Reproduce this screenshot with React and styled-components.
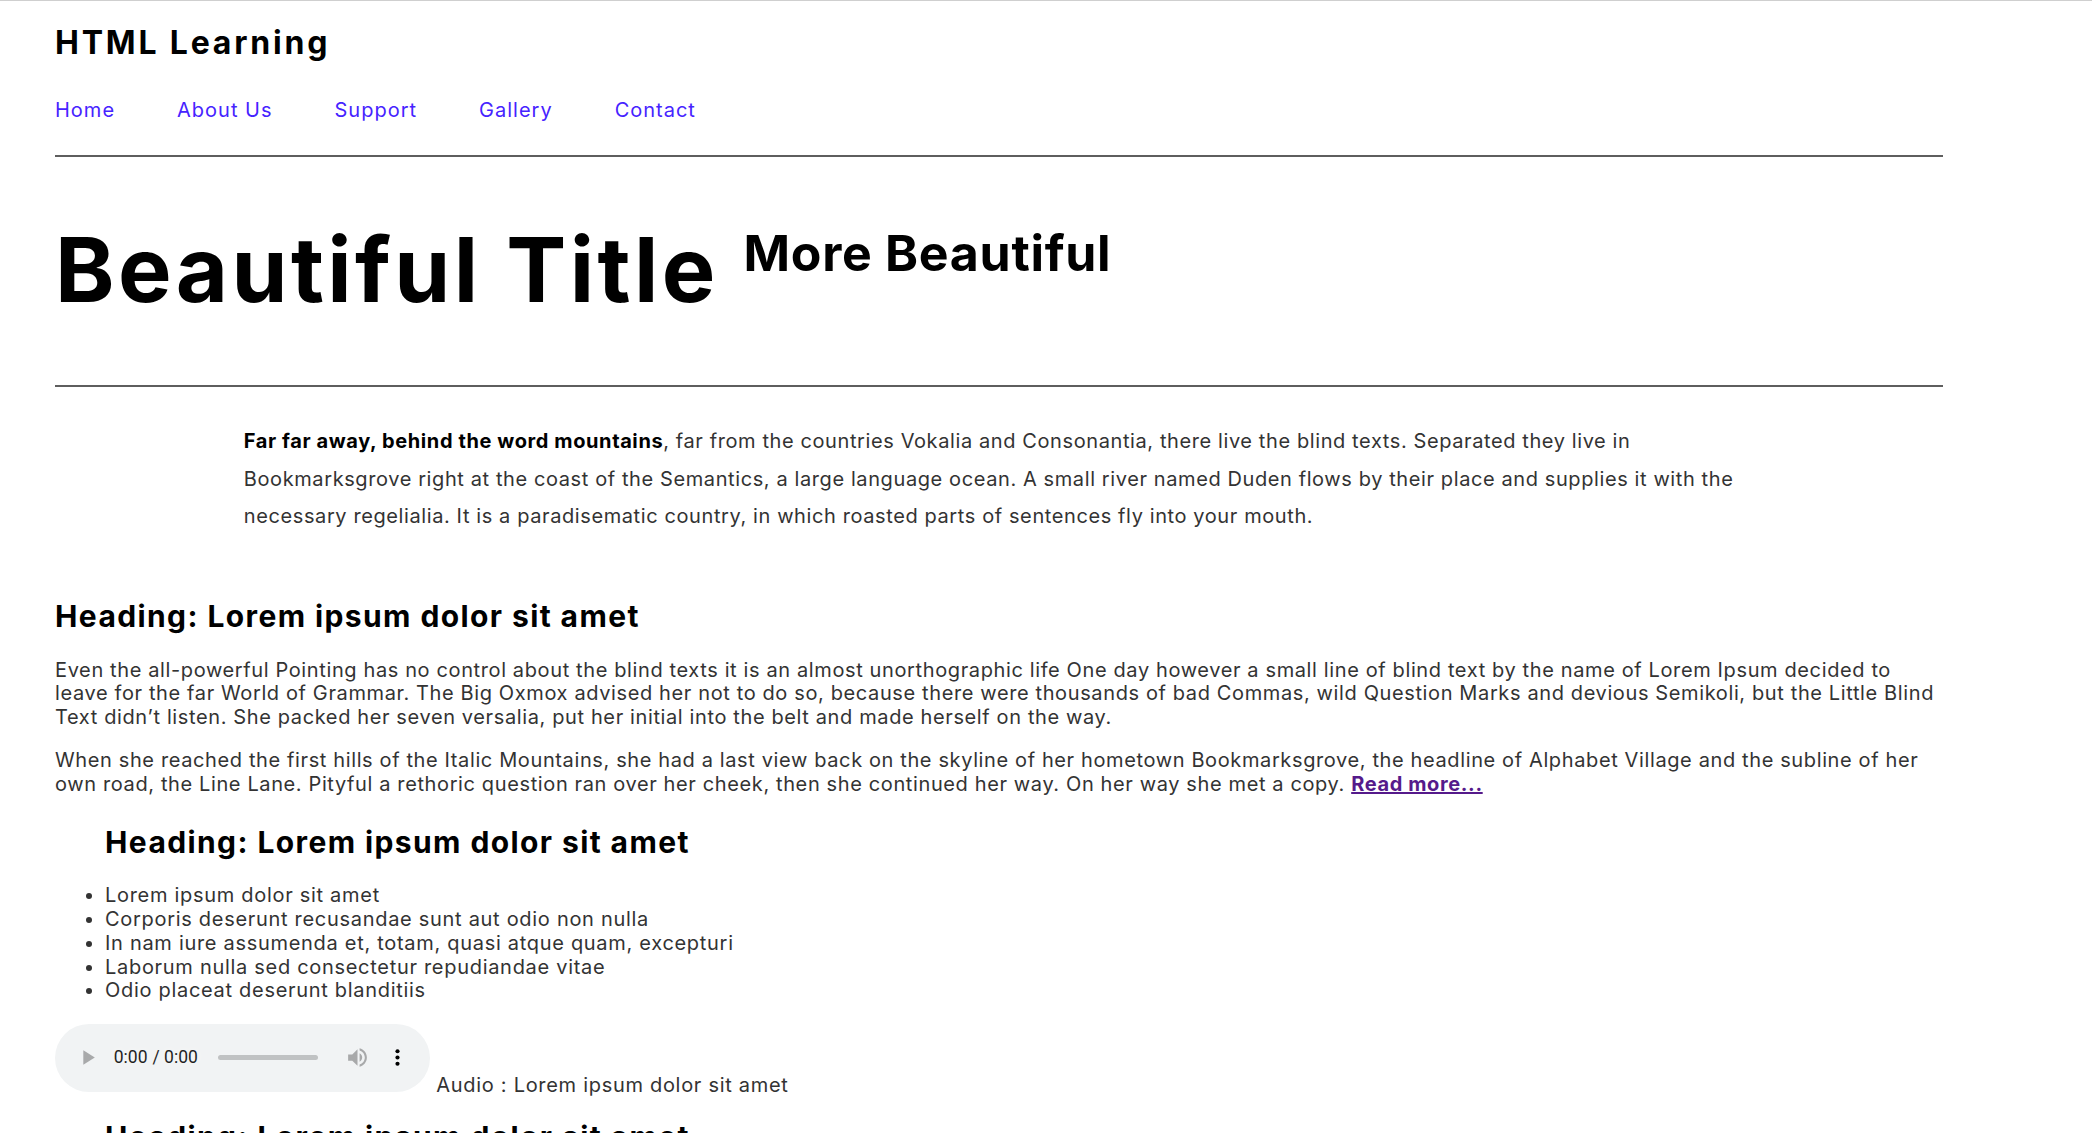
import React from 'react'
import styled, { createGlobalStyle } from 'styled-components'

const GlobalStyle = createGlobalStyle`
  body {
    margin: 0;
    border-top: 1px solid #cfcfcf;
    background: #fff;
    color: #333;
    font-family: Inter, "DejaVu Sans", sans-serif;
  }
`

const Page = styled.div`
  width: 1888px;
  margin-left: 55px;
`

const Header = styled.header`
  padding-top: 22px;
`

const Brand = styled.div`
  font-size: 32px;
  line-height: 40px;
  font-weight: 700;
  color: #000;
  letter-spacing: 2.8px;
`

const Nav = styled.nav`
  display: flex;
  gap: 62px;
  margin-top: 35px;
`

const NavLink = styled.a`
  font-size: 20px;
  line-height: 24px;
  color: #4623ff;
  text-decoration: none;
  letter-spacing: 1px;
`

const Rule = styled.hr`
  height: 0;
  margin: ${p => p.$top}px 0 0;
  border: 0;
  border-top: 2px solid #5e5e5e;
`

const Title = styled.h1`
  margin: 59px 0 0;
  font-size: 90px;
  line-height: 108px;
  font-weight: 700;
  color: #000;
  letter-spacing: 3.4px;
`

const SubTitle = styled.span`
  font-size: 50px;
  line-height: 1;
  letter-spacing: 0.7px;
  vertical-align: 31px;
`

const Intro = styled.p`
  width: 80%;
  margin: 36px auto 0;
  font-size: 20px;
  line-height: 37.5px;
  letter-spacing: 0.6px;

  b {
    color: #000;
  }
`

const Heading = styled.h2`
  margin: ${p => p.$top}px 0 0 ${p => (p.$indent ? 50 : 0)}px;
  font-size: 30px;
  line-height: 36px;
  font-weight: 700;
  color: #000;
  letter-spacing: 1.4px;
`

const Text = styled.p`
  margin: ${p => p.$top}px 0 0;
  font-size: 20px;
  line-height: 23.75px;
  letter-spacing: 0.62px;
`

const ReadMore = styled.a`
  font-weight: 700;
  color: #551a8b;
  text-decoration: underline;
`

const List = styled.ul`
  margin: 24px 0 0;
  padding-left: 50px;
  font-size: 20px;
  line-height: 23.75px;
  letter-spacing: 0.7px;
`

const AudioRow = styled.div`
  margin-top: 21px;
  font-size: 20px;
  line-height: 23.75px;
  letter-spacing: 0.7px;
`

const Player = styled.audio`
  zoom: 1.25;
  vertical-align: baseline;
`

const items = [
  'Lorem ipsum dolor sit amet',
  'Corporis deserunt recusandae sunt aut odio non nulla',
  'In nam iure assumenda et, totam, quasi atque quam, excepturi',
  'Laborum nulla sed consectetur repudiandae vitae',
  'Odio placeat deserunt blanditiis',
]

const links = ['Home', 'About Us', 'Support', 'Gallery', 'Contact']

export default function App() {
  return (
    <>
      <GlobalStyle />
      <Page>
        <Header>
          <Brand>HTML Learning</Brand>
          <Nav>
            {links.map(l => (
              <NavLink key={l} href="#">{l}</NavLink>
            ))}
          </Nav>
        </Header>
        <Rule $top={33} />
        <Title>
          Beautiful Title <SubTitle>More Beautiful</SubTitle>
        </Title>
        <Rule $top={61} />
        <Intro>
          <b>Far far away, behind the word mountains</b>, far from the countries Vokalia and Consonantia, there live the blind texts. Separated they live in Bookmarksgrove right at the coast of the Semantics, a large language ocean. A small river named Duden flows by their place and supplies it with the necessary regelialia. It is a paradisematic country, in which roasted parts of sentences fly into your mouth.
        </Intro>
        <Heading $top={62}>Heading: Lorem ipsum dolor sit amet</Heading>
        <Text $top={25}>
          Even the all-powerful Pointing has no control about the blind texts it is an almost unorthographic life One day however a small line of blind text by the name of Lorem Ipsum decided to leave for the far World of Grammar. The Big Oxmox advised her not to do so, because there were thousands of bad Commas, wild Question Marks and devious Semikoli, but the Little Blind Text didn’t listen. She packed her seven versalia, put her initial into the belt and made herself on the way.
        </Text>
        <Text $top={19}>
          When she reached the first hills of the Italic Mountains, she had a last view back on the skyline of her hometown Bookmarksgrove, the headline of Alphabet Village and the subline of her own road, the Line Lane. Pityful a rethoric question ran over her cheek, then she continued her way. On her way she met a copy. <ReadMore href="#">Read more...</ReadMore>
        </Text>
        <Heading $top={28} $indent>Heading: Lorem ipsum dolor sit amet</Heading>
        <List>
          {items.map(i => (
            <li key={i}>{i}</li>
          ))}
        </List>
        <AudioRow>
          <Player controls /> Audio : Lorem ipsum dolor sit amet
        </AudioRow>
        <Heading $top={22} $indent>Heading: Lorem ipsum dolor sit amet</Heading>
      </Page>
    </>
  )
}
